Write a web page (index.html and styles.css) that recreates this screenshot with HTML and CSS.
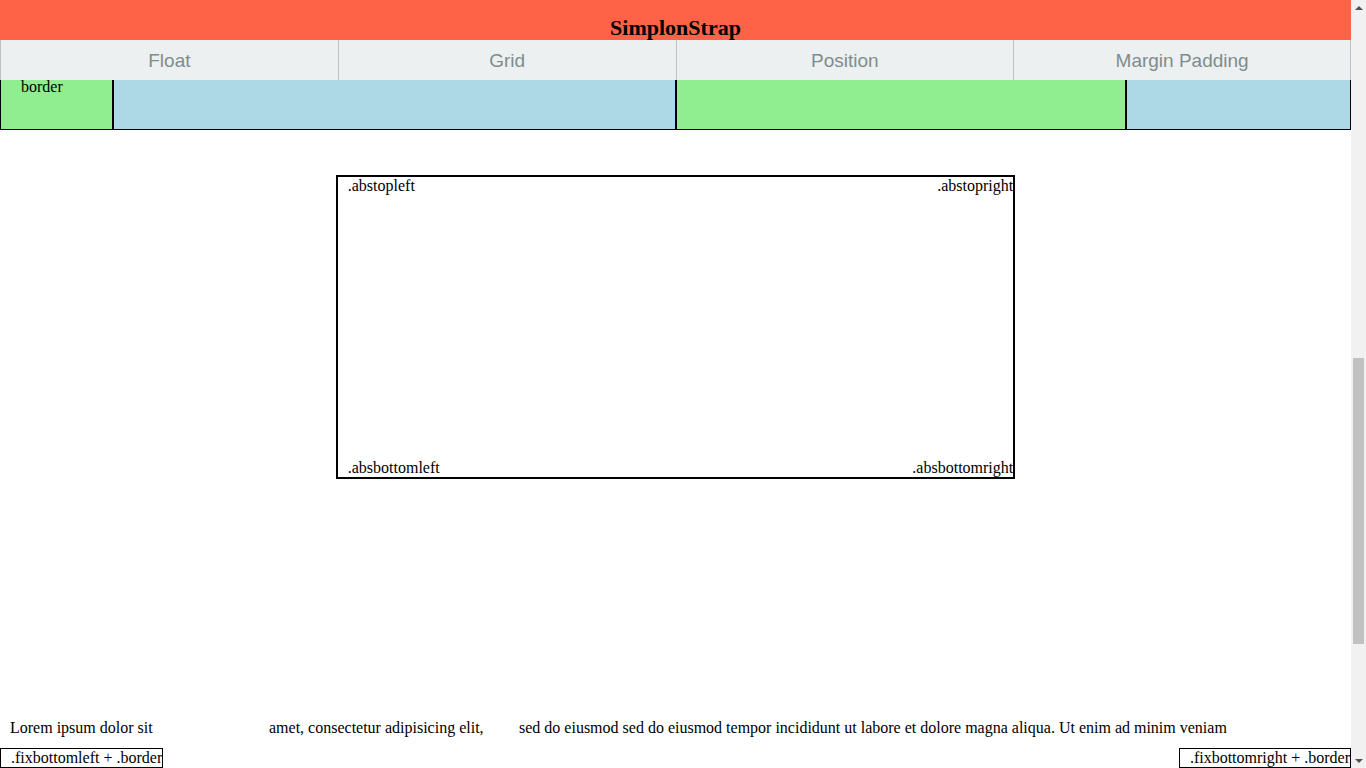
FILE: index.html
```html
<!DOCTYPE html>
<html lang="en">
<head>
<meta charset="utf-8">
<title>SimplonStrap</title>
<link rel="stylesheet" href="styles.css">
</head>
<body>
<div class="frame">
  <div class="viewport">
    <header class="site-header">
      <h1 class="brand">SimplonStrap</h1>
    </header>
    <nav class="main-nav">
      <a class="nav-item" href="#">Float</a>
      <a class="nav-item" href="#">Grid</a>
      <a class="nav-item" href="#">Position</a>
      <a class="nav-item" href="#">Margin Padding</a>
    </nav>
    <section class="grid-row">
      <div class="cell green span-1"><p class="cell-text">border</p></div>
      <div class="cell blue span-5"></div>
      <div class="cell green span-4"></div>
      <div class="cell blue span-2"></div>
    </section>
    <section class="abs-box">
      <div class="abs-line">
        <span class="abs-left">.abstopleft</span>
        <span>.abstopright</span>
      </div>
      <div class="abs-line">
        <span class="abs-left">.absbottomleft</span>
        <span>.absbottomright</span>
      </div>
    </section>
    <p class="lorem">
      <span class="lorem-a">Lorem ipsum dolor sit</span>
      <span class="lorem-b">amet, consectetur adipisicing elit,</span>
      <span class="lorem-c">sed do eiusmod sed do eiusmod tempor incididunt ut labore et dolore magna aliqua. Ut enim ad minim veniam</span>
    </p>
    <div class="fix fix-left">.fixbottomleft + .border</div>
    <div class="fix fix-right">.fixbottomright + .border</div>
  </div>
  <div class="scrollbar">
    <div class="sb-btn"><span class="arrow-up"></span></div>
    <div class="sb-track"><div class="sb-thumb"></div></div>
    <div class="sb-btn"><span class="arrow-down"></span></div>
  </div>
</div>
</body>
</html>
```

FILE: styles.css
```css
html, body {
  margin: 0;
  padding: 0;
  height: 100%;
  overflow: hidden;
  background: #ffffff;
}

body {
  font-family: "Liberation Serif", "Times New Roman", serif;
  font-size: 16px;
  color: #000000;
}

.frame {
  display: flex;
  height: 100vh;
}

.viewport {
  flex: 1;
  min-width: 0;
  display: flex;
  flex-direction: column;
  overflow: hidden;
}

.site-header {
  height: 40px;
  box-sizing: border-box;
  background: #ff6347;
  padding-top: 15px;
  text-align: center;
  overflow: hidden;
  flex-shrink: 0;
}

.brand {
  margin: 0;
  font-size: 22px;
  font-weight: bold;
  line-height: normal;
}

.main-nav {
  height: 40px;
  flex-shrink: 0;
  display: grid;
  grid-template-columns: repeat(4, 1fr);
  background: #ecf0f1;
}

.nav-item {
  display: flex;
  align-items: center;
  justify-content: center;
  padding-top: 2px;
  border-left: 1px solid #bdc3c7;
  color: #7f8c8d;
  text-decoration: none;
  font-family: "Liberation Sans", Arial, sans-serif;
  font-size: 19px;
}

.nav-item:last-child {
  border-right: 1px solid #bdc3c7;
}

.grid-row {
  display: grid;
  grid-template-columns: repeat(12, 1fr);
  height: 50px;
  flex-shrink: 0;
}

.cell {
  box-sizing: border-box;
  border: 1px solid #000000;
  border-top: 0;
}

.span-1 { grid-column: span 1; }
.span-2 { grid-column: span 2; }
.span-4 { grid-column: span 4; }
.span-5 { grid-column: span 5; }

.green { background: #90ee90; }
.blue { background: #add8e6; }

.cell-text {
  margin: 0;
  padding-left: 20px;
  line-height: 14px;
}

.abs-box {
  width: 50%;
  height: 300px;
  margin: 45px auto 0;
  border: 2px solid #000000;
  display: flex;
  flex-direction: column;
  justify-content: space-between;
  flex-shrink: 0;
}

.abs-line {
  display: flex;
  justify-content: space-between;
}

.abs-left {
  padding-left: 10px;
}

.lorem {
  margin: 240px 0 0;
  padding-left: 10px;
  display: flex;
  white-space: nowrap;
  flex-shrink: 0;
}

.lorem-a { width: 259px; }
.lorem-b { width: 250px; }

.fix {
  position: fixed;
  bottom: 0;
  border: 1px solid #000000;
  padding-left: 10px;
  background: #ffffff;
  line-height: normal;
}

.fix-left { left: 0; }
.fix-right { right: 15px; }

.scrollbar {
  width: 15px;
  flex-shrink: 0;
  background: #f1f1f1;
  display: flex;
  flex-direction: column;
}

.sb-btn {
  height: 15px;
  display: flex;
  align-items: center;
  justify-content: center;
  flex-shrink: 0;
}

.arrow-up {
  width: 0;
  height: 0;
  border-left: 4px solid transparent;
  border-right: 4px solid transparent;
  border-bottom: 4px solid #505050;
}

.arrow-down {
  width: 0;
  height: 0;
  border-left: 4px solid transparent;
  border-right: 4px solid transparent;
  border-top: 4px solid #505050;
}

.sb-track {
  flex: 1;
  padding-top: 343px;
}

.sb-thumb {
  height: 286px;
  margin: 0 2px;
  background: #c1c1c1;
}
```
